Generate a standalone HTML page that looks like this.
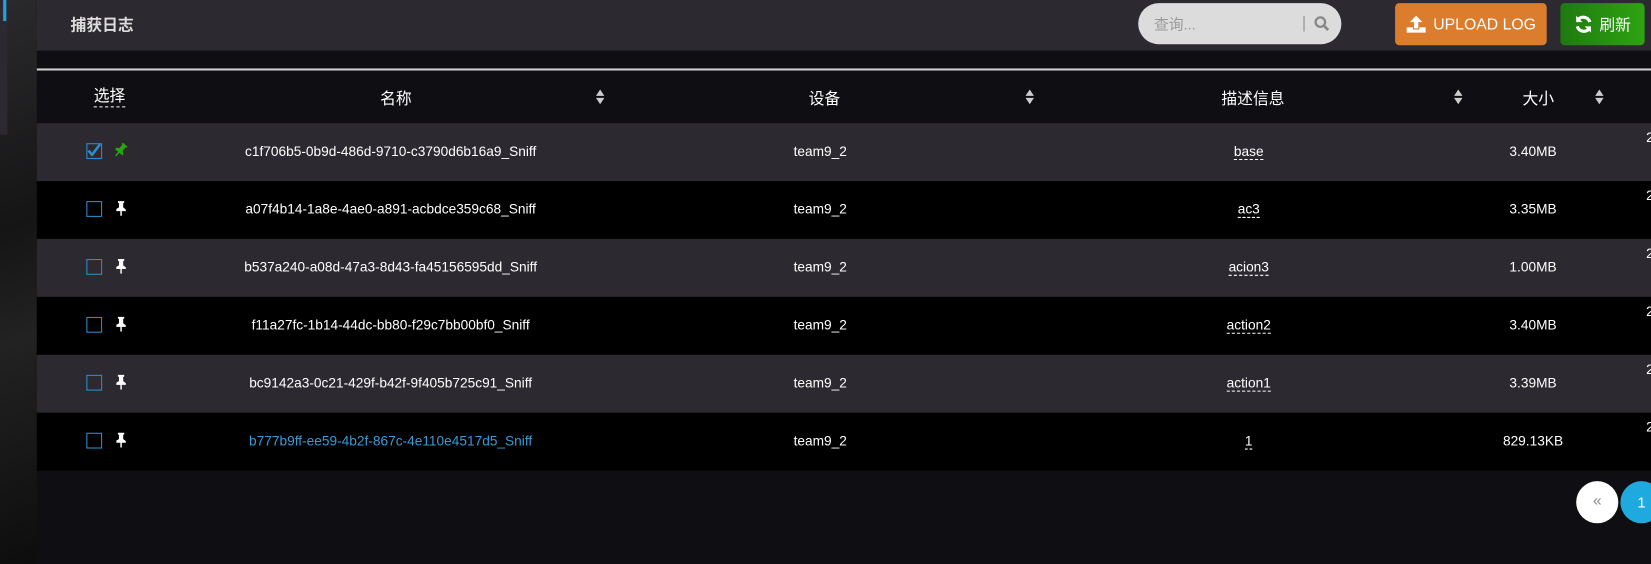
<!DOCTYPE html>
<html><head><meta charset="utf-8"><style>
*{margin:0;padding:0;box-sizing:border-box}
body{width:1651px;height:536px;overflow:hidden;background:#0f0e12;font-family:"Liberation Sans","Noto Sans CJK SC",sans-serif;color:#fff}
#w{position:relative;width:1568px;height:509px;transform:scale(1.0529);transform-origin:0 0}
.abs{position:absolute}
.left{left:0;top:0;width:35px;height:536px;background:linear-gradient(160deg,#2a2a2c,#151516 40%,#222 60%,#0d0d0e)}
.hdr{left:35px;top:0;width:1616px;height:48px;background:#2c2a30}
.title{left:67px;top:13px;font-size:15px;font-weight:bold;color:#ddd}
.search{left:1081px;top:3px;width:193px;height:39px;border-radius:20px;background:#dcdcdc}
.search span{position:absolute;left:15px;top:10px;font-size:14px;color:#999}
.btn{top:3px;height:40px;border-radius:4px;font-size:15px;color:#fff;display:flex;align-items:center;justify-content:center;gap:6px}
.line{left:35px;top:65px;width:1616px;height:2px;background:#d0d0d0}
.th{top:67px;left:35px;width:1616px;height:50px;background:#0f0e12}
.row{left:35px;width:1616px;height:55px}
.t{position:absolute;font-size:13px;transform:translateX(-50%);white-space:nowrap}
.h{position:absolute;font-size:15px;transform:translateX(-50%);top:16px}
.sort{position:absolute;top:18px;width:8px;height:14px}
.cb{position:absolute;left:47px;top:19px;width:15px;height:15px;border:1.5px solid #2a8fd0}
.pin{position:absolute;left:73px;top:18px}
.dash{border-bottom:1px dashed #fff}
</style></head><body><div id="w">
<div class="abs left"></div>
<div class="abs" style="left:0;top:0;width:7px;height:128px;background:#2c2a30"></div>
<div class="abs" style="left:3px;top:0;width:3px;height:20px;background:#1fa3e0"></div>
<div class="abs hdr"></div>
<div class="abs title">捕获日志</div>
<div class="abs search"><span>查询...</span>
<div style="position:absolute;left:157px;top:12px;width:1px;height:15px;background:#888"></div>
<svg style="position:absolute;left:167px;top:12px" width="15" height="15" viewBox="0 0 15 15"><circle cx="6" cy="6" r="4.5" fill="none" stroke="#888" stroke-width="2.2"/><path d="M9.5 9.5L13.5 13.5" stroke="#888" stroke-width="2.6"/></svg></div>
<div class="abs btn" style="left:1325px;width:144px;background:#db7d2c">
<svg width="20" height="18" viewBox="0 0 20 18"><path d="M10 1L4 7h4v6h4V7h4z M1 12h6v2h6v-2h6v5H1z" fill="#fff"/></svg>UPLOAD LOG</div>
<div class="abs btn" style="left:1482px;width:80px;background:linear-gradient(90deg,#1f7a10,#2ea312)">
<svg width="18" height="18" viewBox="0 0 18 18"><path d="M15 7A6.5 6.5 0 0 0 3.5 5" stroke="#fff" stroke-width="3" fill="none"/><path d="M2 1v6h6z" fill="#fff"/><path d="M3 11A6.5 6.5 0 0 0 14.5 13" stroke="#fff" stroke-width="3" fill="none"/><path d="M16 17v-6h-6z" fill="#fff"/></svg>刷新</div>
<div class="abs line"></div>
<div class="abs th">
<div class="h dash" style="left:69px;line-height:18px">选择</div>
<div class="h" style="left:341px">名称</div>
<div class="h" style="left:748px">设备</div>
<div class="h" style="left:1155px">描述信息</div>
<div class="h" style="left:1426px">大小</div>
<svg class="sort" style="left:531px" viewBox="0 0 8 14"><path d="M4 0L8 6H0zM4 14L0 8h8z" fill="#ccc"/></svg>
<svg class="sort" style="left:939px" viewBox="0 0 8 14"><path d="M4 0L8 6H0zM4 14L0 8h8z" fill="#ccc"/></svg>
<svg class="sort" style="left:1346px" viewBox="0 0 8 14"><path d="M4 0L8 6H0zM4 14L0 8h8z" fill="#ccc"/></svg>
<svg class="sort" style="left:1480px" viewBox="0 0 8 14"><path d="M4 0L8 6H0zM4 14L0 8h8z" fill="#ccc"/></svg>
</div>
<div class="abs row" style="top:117px;background:#2c2a30">
<div class="cb"><svg width="13" height="13" viewBox="0 0 13 13" style="position:absolute;left:0;top:-1px"><path d="M1 7l3.5 4L12 1" stroke="#2a8fd0" stroke-width="2.4" fill="none"/></svg></div>
<svg class="pin" width="14" height="15" viewBox="0 0 14 15"><g transform="rotate(40 7 7)"><path d="M4 1h6v1.5l-1 .5v4l2.5 2v1.5h-9V8.5L5 7V3L4 2.5z M6.3 10h1.4v5H6.3z" fill="#2ea312"/></g></svg>
<div class="t" style="left:336px;top:19px">c1f706b5-0b9d-486d-9710-c3790d6b16a9_Sniff</div>
<div class="t" style="left:744px;top:19px">team9_2</div>
<div class="t dash" style="left:1151px;top:19px">base</div>
<div class="t" style="left:1421px;top:19px">3.40MB</div>
<div class="t" style="left:1532px;top:6px">2</div></div>
<div class="abs row" style="top:172px;background:#000">
<div class="cb"></div><svg class="pin" width="14" height="15" viewBox="0 0 14 15"><path d="M4 1h6v1.5l-1 .5v4l2.5 2v1.5h-9V8.5L5 7V3L4 2.5z M6.3 10h1.4v5H6.3z" fill="#fff"/></svg>
<div class="t" style="left:336px;top:19px">a07f4b14-1a8e-4ae0-a891-acbdce359c68_Sniff</div>
<div class="t" style="left:744px;top:19px">team9_2</div>
<div class="t dash" style="left:1151px;top:19px">ac3</div>
<div class="t" style="left:1421px;top:19px">3.35MB</div>
<div class="t" style="left:1532px;top:6px">2</div></div>
<div class="abs row" style="top:227px;background:#2c2a30">
<div class="cb"></div><svg class="pin" width="14" height="15" viewBox="0 0 14 15"><path d="M4 1h6v1.5l-1 .5v4l2.5 2v1.5h-9V8.5L5 7V3L4 2.5z M6.3 10h1.4v5H6.3z" fill="#fff"/></svg>
<div class="t" style="left:336px;top:19px">b537a240-a08d-47a3-8d43-fa45156595dd_Sniff</div>
<div class="t" style="left:744px;top:19px">team9_2</div>
<div class="t dash" style="left:1151px;top:19px">acion3</div>
<div class="t" style="left:1421px;top:19px">1.00MB</div>
<div class="t" style="left:1532px;top:6px">2</div></div>
<div class="abs row" style="top:282px;background:#000">
<div class="cb"></div><svg class="pin" width="14" height="15" viewBox="0 0 14 15"><path d="M4 1h6v1.5l-1 .5v4l2.5 2v1.5h-9V8.5L5 7V3L4 2.5z M6.3 10h1.4v5H6.3z" fill="#fff"/></svg>
<div class="t" style="left:336px;top:19px">f11a27fc-1b14-44dc-bb80-f29c7bb00bf0_Sniff</div>
<div class="t" style="left:744px;top:19px">team9_2</div>
<div class="t dash" style="left:1151px;top:19px">action2</div>
<div class="t" style="left:1421px;top:19px">3.40MB</div>
<div class="t" style="left:1532px;top:6px">2</div></div>
<div class="abs row" style="top:337px;background:#2c2a30">
<div class="cb"></div><svg class="pin" width="14" height="15" viewBox="0 0 14 15"><path d="M4 1h6v1.5l-1 .5v4l2.5 2v1.5h-9V8.5L5 7V3L4 2.5z M6.3 10h1.4v5H6.3z" fill="#fff"/></svg>
<div class="t" style="left:336px;top:19px">bc9142a3-0c21-429f-b42f-9f405b725c91_Sniff</div>
<div class="t" style="left:744px;top:19px">team9_2</div>
<div class="t dash" style="left:1151px;top:19px">action1</div>
<div class="t" style="left:1421px;top:19px">3.39MB</div>
<div class="t" style="left:1532px;top:6px">2</div></div>
<div class="abs row" style="top:392px;background:#000">
<div class="cb"></div><svg class="pin" width="14" height="15" viewBox="0 0 14 15"><path d="M4 1h6v1.5l-1 .5v4l2.5 2v1.5h-9V8.5L5 7V3L4 2.5z M6.3 10h1.4v5H6.3z" fill="#fff"/></svg>
<div class="t" style="left:336px;top:19px;color:#3a9ad6">b777b9ff-ee59-4b2f-867c-4e110e4517d5_Sniff</div>
<div class="t" style="left:744px;top:19px">team9_2</div>
<div class="t dash" style="left:1151px;top:19px">1</div>
<div class="t" style="left:1421px;top:19px">829.13KB</div>
<div class="t" style="left:1532px;top:6px">2</div></div>
<div class="abs" style="left:1497px;top:457px;width:40px;height:40px;border-radius:50%;background:#fff;color:#888;font-size:15px;text-align:center;line-height:38px">«</div>
<div class="abs" style="left:1539px;top:457px;width:40px;height:40px;border-radius:50%;background:#1ea9df;color:#fff;font-size:14px;text-align:center;line-height:40px">1</div>
</div></body></html>
